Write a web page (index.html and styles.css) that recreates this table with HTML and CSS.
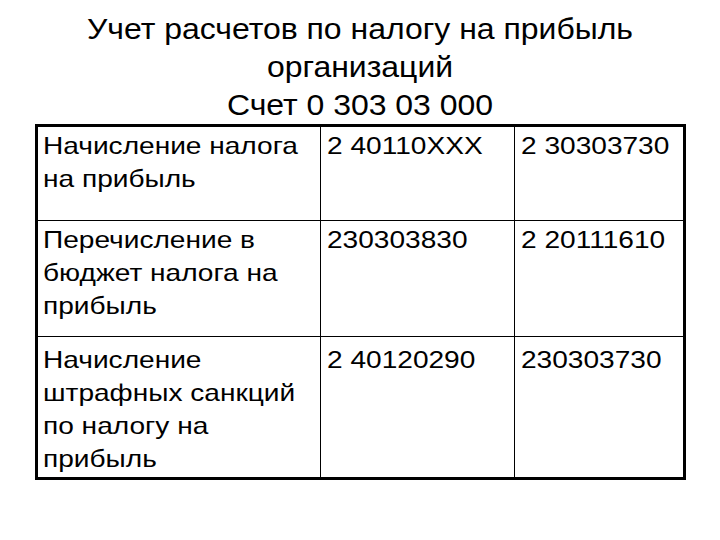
FILE: index.html
```html
<!DOCTYPE html>
<html lang="ru">
<head>
<meta charset="utf-8">
<link rel="stylesheet" href="styles.css">
</head>
<body>
<div class="slide">
  <h1 class="title">
    <span class="tline">Учет расчетов по налогу на прибыль</span>
    <span class="tline">организаций</span>
    <span class="tline">Счет 0 303 03 000</span>
  </h1>
  <table class="grid">
    <tr class="r1">
      <td class="c1"><div class="txt w1">Начисление налога на прибыль</div></td>
      <td class="c2"><div class="txt">2 40110XXX</div></td>
      <td class="c3"><div class="txt">2 30303730</div></td>
    </tr>
    <tr class="r2">
      <td class="c1"><div class="txt w1">Перечисление в бюджет налога на прибыль</div></td>
      <td class="c2"><div class="txt">230303830</div></td>
      <td class="c3"><div class="txt">2 20111610</div></td>
    </tr>
    <tr class="r3">
      <td class="c1"><div class="txt w1">Начисление штрафных санкций по налогу на прибыль</div></td>
      <td class="c2"><div class="txt">2 40120290</div></td>
      <td class="c3"><div class="txt">230303730</div></td>
    </tr>
  </table>
</div>
</body>
</html>
```
FILE: styles.css
```css
html, body {
  margin: 0;
  padding: 0;
  background: #fff;
}
.slide {
  width: 720px;
  height: 540px;
  font-family: "Liberation Sans", Arial, sans-serif;
  color: #000;
}
.title {
  margin: 0;
  padding-top: 10px;
  height: 124px;
  box-sizing: border-box;
  font-weight: normal;
  font-size: 30px;
  line-height: 38px;
  text-align: center;
}
.tline {
  display: block;
  transform: scaleX(1.065);
  transform-origin: center;
}
.grid {
  margin-left: 35px;
  border-collapse: collapse;
  border: 3px solid #000;
  font-size: 24px;
  line-height: 33px;
}
.grid td {
  border: 1px solid #000;
  vertical-align: top;
  padding: 2px 6px 0 6px;
  box-sizing: border-box;
}
.txt {
  white-space: nowrap;
  transform: scaleX(1.17);
  transform-origin: left top;
}
.txt.w1 {
  white-space: normal;
  width: 233px;
}
.c1 { width: 284px; padding-left: 5px !important; }
.c2 { width: 194px; }
.c3 { width: 170px; }
.r1 { height: 95px; }
.r2 { height: 116px; }
.r3 { height: 142px; }
.r3 td { padding-top: 6px; }
```
